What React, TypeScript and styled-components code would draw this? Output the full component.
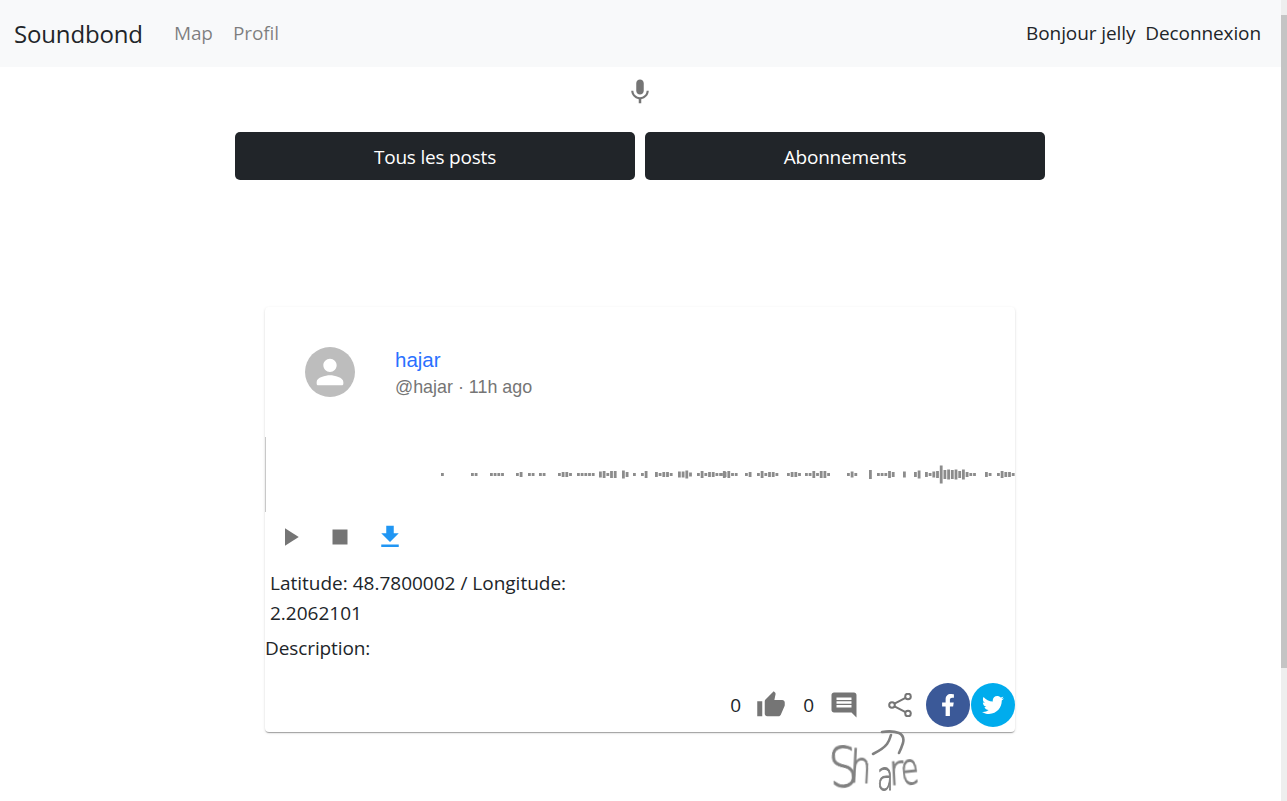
import styled, { createGlobalStyle } from "styled-components";
import { FaFacebookF, FaTwitter } from "react-icons/fa";

const GlobalStyle = createGlobalStyle`
  html, body {
    margin: 0;
    height: 100%;
    overflow: hidden;
    background: #fff;
    font-family: "Open Sans", "Noto Sans", sans-serif;
    color: #212529;
  }
`;

const Shell = styled.div`
  position: relative;
  display: flex;
  height: 801px;
  overflow: hidden;
`;

const Page = styled.main`
  flex: 1;
  min-width: 0;
`;

const Content = styled.div`
  padding-right: 1px;
`;

const ScrollTrack = styled.div`
  width: 6px;
  padding-top: 15px;
  background: #eeeeee;
`;

const ScrollThumb = styled.div`
  height: 653px;
  background: #c4c4c4;
`;

const Navbar = styled.nav`
  display: flex;
  align-items: center;
  height: 67px;
  padding: 0 20px 0 14px;
  background: #f8f9fa;
`;

const Brand = styled.span`
  font-size: 24px;
  letter-spacing: -0.15px;
  margin-right: 31px;
  color: #212529;
`;

const NavLink = styled.a<{ $muted?: boolean; $gap: number }>`
  font-size: 19px;
  letter-spacing: -0.1px;
  padding-bottom: 2px;
  margin-right: ${(p) => p.$gap}px;
  color: ${(p) => (p.$muted ? "rgba(0, 0, 0, 0.5)" : "#212529")};
`;

const Spacer = styled.div`
  flex: 1;
`;

const MicRow = styled.div`
  display: flex;
  justify-content: center;
  padding-top: 10px;
  height: 55px;
`;

const Tabs = styled.div`
  display: flex;
  justify-content: center;
  gap: 10px;
`;

const TabButton = styled.button`
  width: 400px;
  height: 48px;
  padding: 2px 0 0;
  border: 0;
  border-radius: 5px;
  background: #212529;
  color: #fff;
  font: inherit;
  font-size: 19px;
  letter-spacing: -0.2px;
`;

const Card = styled.article`
  width: 750px;
  height: 425px;
  margin: 127px auto 0;
  display: flex;
  flex-direction: column;
  border-radius: 4px;
  background: #fff;
  box-shadow: 0 2px 1px -1px rgba(0, 0, 0, 0.2), 0 1px 1px 0 rgba(0, 0, 0, 0.14), 0 1px 3px 0 rgba(0, 0, 0, 0.12);
`;

const CardHeader = styled.header`
  display: flex;
  align-items: flex-start;
  gap: 40px;
  height: 130px;
  padding: 40px;
  box-sizing: border-box;
`;

const Avatar = styled.div`
  width: 50px;
  height: 50px;
  border-radius: 50%;
  background: #bdbdbd;
  display: flex;
  align-items: center;
  justify-content: center;
`;

const Author = styled.div`
  display: flex;
  flex-direction: column;
  font-family: "Liberation Sans", Arial, sans-serif;
`;

const AuthorName = styled.a`
  font-size: 20.5px;
  line-height: 26px;
  color: #2970ff;
`;

const AuthorMeta = styled.span`
  font-size: 17.9px;
  line-height: 28px;
  color: #757575;
`;

const Wave = styled.svg`
  display: block;
  width: 750px;
  height: 75px;
`;

const Controls = styled.div`
  display: flex;
`;

const IconButton = styled.button`
  width: 50px;
  height: 50px;
  padding: 10px;
  border: 0;
  background: none;
  display: flex;
`;

const Coords = styled.p`
  width: 310px;
  margin: 6px 0 0 5px;
  font-size: 19px;
  line-height: 30px;
`;

const Description = styled.p`
  margin: 5px 0 0;
  font-size: 19px;
  line-height: 30px;
  letter-spacing: -0.1px;
`;

const Actions = styled.div`
  display: flex;
  align-items: center;
  justify-content: flex-end;
  height: 44px;
  margin-top: 20px;
`;

const Count = styled.span<{ $gap: number }>`
  font-size: 19px;
  color: #212529;
  margin-right: ${(p) => p.$gap}px;
`;

const ActionIcon = styled.svg<{ $gap: number; $size?: number }>`
  width: ${(p) => p.$size ?? 30}px;
  height: ${(p) => p.$size ?? 30}px;
  margin-right: ${(p) => p.$gap}px;
  flex: none;
`;

const Social = styled.a<{ $bg: string }>`
  width: 44px;
  height: 44px;
  border-radius: 50%;
  background: ${(p) => p.$bg};
  color: #fff;
  display: flex;
  align-items: center;
  justify-content: center;
  font-size: 22px;
  & + & {
    margin-left: 1px;
  }
`;

// hand written note over the page
const Note = styled.div`
  position: absolute;
  left: 825px;
  top: 725px;
  width: 105px;
  height: 76px;
  pointer-events: none;
`;

const NoteArrow = styled.svg`
  position: absolute;
  inset: 0;
  filter: blur(0.5px);
`;

const NoteLetter = styled.span<{ $x: number; $y: number; $size: number; $sx: number; $rot: number }>`
  position: absolute;
  left: ${(p) => p.$x}px;
  top: ${(p) => p.$y}px;
  font-family: "DejaVu Sans", sans-serif;
  font-weight: 200;
  font-size: ${(p) => p.$size}px;
  line-height: 1;
  color: #808080;
  -webkit-text-stroke: 1px #808080;
  filter: blur(0.6px);
  transform-origin: left bottom;
  transform: rotate(${(p) => p.$rot}deg) scaleX(${(p) => p.$sx});
`;

// [start x on the card, bar heights]
const segments: [number, number[]][] = [
  [176, [3]],
  [206, [3, 3]],
  [225, [3, 3, 3, 3]],
  [251, [3, 5]],
  [263, [3, 3]],
  [274, [3, 3]],
  [293, [3, 5, 5, 3]],
  [312, [3, 3, 3, 3, 3]],
  [334, [6, 7, 3, 7, 7]],
  [357, [8, 5]],
  [368, [3]],
  [376, [3, 7]],
  [390, [5, 3, 5, 5, 3]],
  [413, [6, 6, 8, 4]],
  [432, [3, 7, 3, 5, 5, 3, 3, 7]],
  [455, [3, 5, 7, 3, 3]],
  [480, [3, 5]],
  [492, [3, 7, 3, 5, 5, 3]],
  [522, [3, 5, 5, 3]],
  [540, [3, 3, 7, 3, 7, 7, 3]],
  [582, [3, 6, 3]],
  [604, [9]],
  [612, [3, 3, 3, 7, 5]],
  [638, [6]],
  [649, [5, 8]],
  [660, [5, 3, 6, 7, 18, 9, 10, 9, 10, 7, 10, 5, 3, 3]],
  [720, [5, 3]],
  [732, [3, 7, 5, 5, 3]],
];

const bars = segments.flatMap(([start, heights]) =>
  heights.map((h, i) => ({ x: start + i * 3.7, h }))
);

const App = () => {
  return (
    <Shell>
      <GlobalStyle />
      <Page>
        <Navbar>
          <Brand>Soundbond</Brand>
          <NavLink $muted $gap={20}>Map</NavLink>
          <NavLink $muted $gap={0}>Profil</NavLink>
          <Spacer />
          <NavLink $gap={10}>Bonjour jelly</NavLink>
          <NavLink $gap={0}>Deconnexion</NavLink>
        </Navbar>

        <Content>
          <MicRow>
            <svg width="30" height="30" viewBox="0 0 24 24" fill="#757575">
              <path d="M12 14c1.66 0 2.99-1.34 2.99-3L15 5c0-1.66-1.34-3-3-3S9 3.34 9 5v6c0 1.66 1.34 3 3 3zm5.3-3c0 3-2.54 5.1-5.3 5.1S6.7 14 6.7 11H5c0 3.41 2.72 6.23 6 6.72V21h2v-3.28c3.28-.48 6-3.3 6-6.72h-1.7z" />
            </svg>
          </MicRow>

          <Tabs>
            <TabButton>Tous les posts</TabButton>
            <TabButton>Abonnements</TabButton>
          </Tabs>

          <Card>
            <CardHeader>
              <Avatar>
                <svg width="40" height="40" viewBox="0 0 24 24" fill="#fff">
                  <path d="M12 12c2.21 0 4-1.79 4-4s-1.79-4-4-4-4 1.79-4 4 1.79 4 4 4zm0 2c-2.67 0-8 1.34-8 4v1c0 .55.45 1 1 1h14c.55 0 1-.45 1-1v-1c0-2.66-5.33-4-8-4z" />
                </svg>
              </Avatar>
              <Author>
                <AuthorName>hajar</AuthorName>
                <AuthorMeta>@hajar · 11h ago</AuthorMeta>
              </Author>
            </CardHeader>

            <Wave viewBox="0 0 750 75">
              <rect x="0" y="0" width="1" height="75" fill="#c8c8c8" />
              {bars.map((b) => (
                <rect key={b.x} x={b.x} y={37.5 - b.h / 2} width="2.8" height={b.h} fill="#8c8c8c" />
              ))}
            </Wave>

            <Controls>
              <IconButton>
                <svg width="30" height="30" viewBox="0 0 24 24" fill="#757575"><path d="M8 5v14l11-7z" /></svg>
              </IconButton>
              <IconButton>
                <svg width="30" height="30" viewBox="0 0 24 24" fill="#757575"><path d="M6 6h12v12H6z" /></svg>
              </IconButton>
              <IconButton>
                <svg width="30" height="30" viewBox="0 0 24 24" fill="#2196f3"><path d="M19 9h-4V3H9v6H5l7 7 7-7zM5 18v2h14v-2H5z" /></svg>
              </IconButton>
            </Controls>

            <Coords>Latitude: 48.7800002 / Longitude: 2.2062101</Coords>
            <Description>Description:</Description>

            <Actions>
              <Count $gap={15}>0</Count>
              <ActionIcon $gap={17} viewBox="0 0 24 24" fill="#757575">
                <path d="M1 21h4V9H1v12zm22-11c0-1.1-.9-2-2-2h-6.31l.95-4.57.03-.32c0-.41-.17-.79-.44-1.06L14.17 1 7.59 7.59C7.22 7.95 7 8.45 7 9v10c0 1.1.9 2 2 2h9c.83 0 1.54-.5 1.84-1.22l3.02-7.05c.09-.23.14-.47.14-.73v-2z" />
              </ActionIcon>
              <Count $gap={15}>0</Count>
              <ActionIcon $gap={29} viewBox="0 0 24 24" fill="#757575">
                <path d="M21.99 4c0-1.1-.89-2-1.99-2H4c-1.1 0-2 .9-2 2v12c0 1.1.9 2 2 2h14l4 4-.01-18zM18 14H6v-2h12v2zm0-3H6V9h12v2zm0-3H6V6h12v2z" />
              </ActionIcon>
              <ActionIcon $gap={14} $size={24} viewBox="0 0 24 24" fill="none" stroke="#757575" strokeWidth="2">
                <circle cx="20" cy="3.5" r="2.8" />
                <circle cx="4" cy="12" r="2.8" />
                <circle cx="20" cy="20.5" r="2.8" />
                <path d="M17.5 4.8 6.5 10.7M6.5 13.3l11 5.9" />
              </ActionIcon>
              <Social $bg="#3b5998"><FaFacebookF /></Social>
              <Social $bg="#00aced"><FaTwitter /></Social>
            </Actions>
          </Card>
        </Content>
      </Page>

      <ScrollTrack>
        <ScrollThumb />
      </ScrollTrack>

      <Note>
        <NoteArrow width="105" height="76" viewBox="0 0 105 76" fill="none" stroke="#808080" strokeWidth="2.6" strokeLinecap="round" strokeLinejoin="round">
          <path d="M48 29c6-3 11-6 14-10s3-7 4-9" />
          <path d="M57 7c6-1 12-1 17 1 4 2 5 6 4 10-1 3-2 6-4 10" />
        </NoteArrow>
        <NoteLetter $x={6} $y={15} $size={56} $sx={0.8} $rot={-4}>S</NoteLetter>
        <NoteLetter $x={24} $y={19} $size={45} $sx={0.75} $rot={3}>h</NoteLetter>
        <NoteLetter $x={52} $y={31} $size={40} $sx={0.68} $rot={0}>a</NoteLetter>
        <NoteLetter $x={65} $y={25} $size={42} $sx={0.85} $rot={-3}>r</NoteLetter>
        <NoteLetter $x={78} $y={22} $size={45} $sx={0.65} $rot={-6}>e</NoteLetter>
      </Note>
    </Shell>
  );
};

export default App;
